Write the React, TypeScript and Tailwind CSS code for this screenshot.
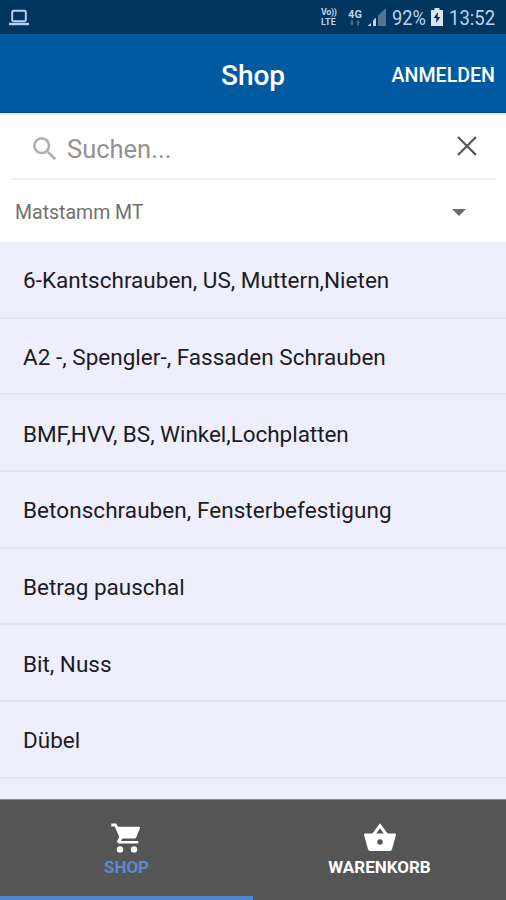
import { MdSearch } from 'react-icons/md'

const categories = [
  { name: '6-Kantschrauben, US, Muttern,Nieten', tracking: 'tracking-[0.01px]' },
  { name: 'A2 -, Spengler-, Fassaden Schrauben', tracking: 'tracking-[0.02px]' },
  { name: 'BMF,HVV, BS, Winkel,Lochplatten', tracking: 'tracking-[-0.04px]' },
  { name: 'Betonschrauben, Fensterbefestigung', tracking: 'tracking-[0.06px]' },
  { name: 'Betrag pauschal', tracking: 'tracking-normal' },
  { name: 'Bit, Nuss', tracking: 'tracking-normal' },
  { name: 'Dübel', tracking: 'tracking-normal' },
]

const CartIcon = () => {
  return (
    <svg className="shrink-0" width="30" height="30" viewBox="0 0 30 30" fill="currentColor">
      <path d="M0.3 0.5H5.2L7 3.7H28.2Q29.4 3.9 29 5L25.3 14.3Q24.7 15.6 23.3 15.6H11.4L9.9 18H27.2V20.4H8Q5.5 19.9 6.3 17.6L8.3 14L3.7 3.5H0.3Z" />
      <circle cx="9" cy="26.4" r="3.2" />
      <circle cx="23" cy="26.4" r="3.2" />
    </svg>
  )
}

const BasketIcon = () => {
  return (
    <svg className="shrink-0" width="32" height="30" viewBox="0 0 32 30" fill="currentColor">
      <path
        fillRule="evenodd"
        d="M16 0.3L23.6 10.6H31Q32.2 10.8 31.9 12L28 26.2Q27.5 28 25.7 28H6.3Q4.5 28 4 26.2L0.1 12Q-0.2 10.8 1 10.6H8.4ZM16 5.2L12.3 10.6H19.7ZM16 16.2A2.8 2.8 0 1 0 16 21.8A2.8 2.8 0 1 0 16 16.2Z"
      />
    </svg>
  )
}

const StatusBar = () => {
  return (
    <div className="flex h-[34px] shrink-0 items-center justify-between bg-[#00355f] pl-[9px] pr-[11px] text-[#b9d3ee]">
      <svg width="20" height="17" viewBox="0 0 20 17" fill="none" stroke="currentColor">
        <rect x="3.2" y="1.7" width="13.6" height="10.6" rx="1.2" strokeWidth="1.9" />
        <path d="M0 15h20" strokeWidth="2.4" />
      </svg>

      <div className="flex items-center">
        <div className="flex w-[18px] flex-col text-[9px] font-bold leading-[11px]">
          <span className="-mb-px tracking-[-0.4px]">Vo&#x29;&#x29;</span>
          <span className="tracking-[0.2px]">LTE</span>
        </div>
        <div className="ml-[9px] flex w-[14px] flex-col items-center">
          <span className="text-[11px] font-bold leading-[11px]">4G</span>
          <svg width="10" height="6" viewBox="0 0 10 6" fill="#537594">
            <path d="M0 3h1.2V0h1.6v3H4L2 5.5zM6 2.5h1.2v3h1.6v-3H10L8 0z" />
          </svg>
        </div>
        <svg className="ml-[6px]" width="18" height="18" viewBox="0 0 18 18">
          <path d="M0 17.5L3 15v3H0zM5 12.5L8 9.5V18H5z" fill="currentColor" />
          <path d="M10 7.5l2.5-2.5V18H10zM12.5 5L18 0v18h-5.5z" fill="#537594" />
        </svg>
        <span className="ml-[6px] w-[35px] origin-left scale-x-[0.87] whitespace-nowrap pt-0.5 text-[21px] leading-[22px]">
          92%
        </span>
        <svg className="ml-[4px]" width="12" height="18" viewBox="0 0 12 18">
          <path d="M3.5 0h5v2H12v16H0V2h3.5z" fill="#d8e4f0" />
          <path d="M7 4L2.8 10h2.7L5 15l4.2-6H6.5z" fill="#00264a" />
        </svg>
        <span className="ml-[6px] w-[46px] origin-left scale-x-[0.88] whitespace-nowrap pt-0.5 text-[21px] leading-[22px]">
          13:52
        </span>
      </div>
    </div>
  )
}

const Header = () => {
  return (
    <header className="grid h-[79px] shrink-0 grid-cols-3 items-center border-b border-[#0b4888] bg-[#005a9f] px-[11px] pt-[5px] text-white">
      <h1 className="col-start-2 text-center text-[28px] font-medium leading-8">Shop</h1>
      <button className="text-right text-[19.6px] font-medium leading-6">ANMELDEN</button>
    </header>
  )
}

const SearchField = () => {
  return (
    <div className="ml-3 mr-2.5 flex h-[67px] shrink-0 items-center border-b-2 border-[#eeeeee] pl-[17px] pr-[19px] pt-1.5">
      <MdSearch className="size-[32px] text-[#b0b0b0]" />
      <span className="ml-[6px] flex-1 text-[25.5px] leading-8 text-[#929292]">Suchen...</span>
      <svg className="-mt-1.5" width="20" height="20" viewBox="0 0 20 20" stroke="#555555" strokeWidth="2.2">
        <path d="M1 1l18 18M19 1L1 19" />
      </svg>
    </div>
  )
}

const StockSelect = () => {
  return (
    <div className="flex h-[62px] shrink-0 items-center justify-between pl-[15px] pr-[40px] pt-[3px]">
      <span className="text-[19.5px] leading-6 text-[#707070]">Matstamm MT</span>
      <svg width="14" height="7" viewBox="0 0 14 7" fill="#6b6b6b">
        <path d="M0 0h14L7 7z" />
      </svg>
    </div>
  )
}

const App = () => {
  return (
    <div className="flex h-[900px] w-[506px] flex-col overflow-hidden bg-white font-[Roboto,sans-serif]">
      <StatusBar />
      <Header />
      <div className="-mb-[3px] h-[3px] shrink-0 bg-linear-to-b from-[#d5e1e8] to-white" />
      <SearchField />
      <StockSelect />

      <ul className="min-h-0 flex-1 overflow-hidden bg-[#efeefd]">
        {categories.map((category) => (
          <li
            key={category.name}
            className="flex h-[76.67px] items-center border-b-2 border-[#e5e4ea] pl-[23px] pt-[4px] text-[22.5px] text-[#1c1c22]"
          >
            <span className={category.tracking}>{category.name}</span>
          </li>
        ))}
      </ul>

      <nav className="grid h-[101px] shrink-0 grid-cols-2 border-t border-[#8d8d92] bg-[#555555] text-[17px] font-bold leading-6">
        <div className="flex flex-col items-center gap-[2px] border-b-4 border-[#5087cc] pt-[23px] text-[#5a8bd0]">
          <div className="pr-0.5 text-white">
            <CartIcon />
          </div>
          <span>SHOP</span>
        </div>
        <div className="flex flex-col items-center gap-[2px] pt-[23px] text-white">
          <BasketIcon />
          <span>WARENKORB</span>
        </div>
      </nav>
    </div>
  )
}

export default App
